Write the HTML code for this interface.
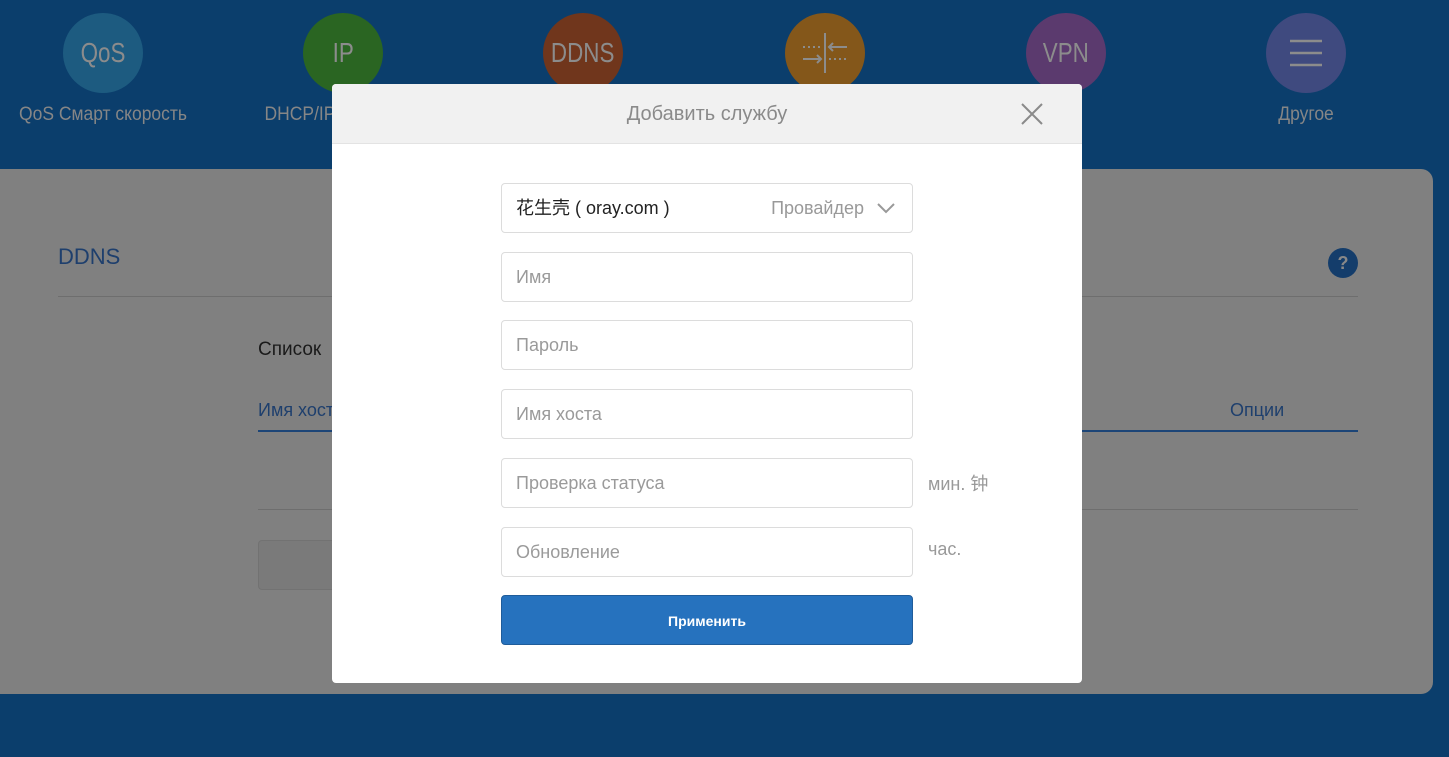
<!DOCTYPE html>
<html><head><meta charset="utf-8">
<style>
*{margin:0;padding:0;box-sizing:border-box}
body{width:1449px;height:757px;background:#0b3e6c;position:relative;overflow:hidden;font-family:"Liberation Sans","Noto Sans CJK SC",sans-serif}
.c{position:absolute;top:13px;width:80px;height:80px;border-radius:50%;color:#8c8c8c;font-family:"Liberation Sans Narrow","Liberation Sans",sans-serif;font-size:28px;text-align:center;line-height:80px}
.c span{display:inline-block;transform:scaleX(.8)}
.lb{position:absolute;top:104px;color:#868686;font-family:"Liberation Sans Narrow","Liberation Sans",sans-serif;font-size:19px;white-space:nowrap;transform:translateX(-50%) scaleX(.92)}
.panel{position:absolute;left:0;top:169px;width:1433px;height:525px;background:#808080;border-radius:0 12px 12px 0}
.abs{position:absolute}
.modal{position:absolute;left:332px;top:84px;width:750px;height:599px;background:#fff;border-radius:4px;overflow:hidden}
.mh{height:60px;background:#f1f1f1;border-bottom:1px solid #e3e3e3;text-align:center;line-height:60px;font-size:20px;color:#8a8a8a}
.in{position:absolute;left:169px;width:412px;height:50px;border:1px solid #dcdcdc;border-radius:4px;font-size:18px;color:#9a9a9a;line-height:48px;padding-left:14px}
.u{position:absolute;left:596px;font-size:18px;color:#999}
</style></head><body>
<div class="c" style="left:63px;background:#1d5b80"><span>QoS</span></div>
<div class="c" style="left:303px;background:#2a6522"><span>IP</span></div>
<div class="c" style="left:543px;background:#70361c"><span>DDNS</span></div>
<div class="c" style="left:785px;background:#84571a">
<svg width="80" height="80" viewBox="0 0 80 80"><g stroke="#8c8c8c" stroke-width="2" fill="none"><line x1="40" y1="20" x2="40" y2="60"/><path d="M44 34h18M48 30l-4 4 4 4" /><path d="M18 46h18M32 42l4 4-4 4"/><path d="M18 34h18M44 46h18" stroke-dasharray="2 3"/></g></svg></div>
<div class="c" style="left:1026px;background:#5b3a6e"><span>VPN</span></div>
<div class="c" style="left:1266px;background:#3f4a7f">
<svg width="80" height="80" viewBox="0 0 80 80"><g stroke="#8c8c8c" stroke-width="2.5"><line x1="24" y1="28" x2="56" y2="28"/><line x1="24" y1="40" x2="56" y2="40"/><line x1="24" y1="52" x2="56" y2="52"/></g></svg></div>
<div class="lb" style="left:103px">QoS Смарт скорость</div>
<div class="lb" style="left:300px">DHCP/IP</div>
<div class="lb" style="left:1306px">Другое</div>

<div class="panel"></div>
<div class="abs" style="left:58px;top:244px;font-size:22px;color:#1e3f6d">DDNS</div>
<div class="abs" style="left:58px;top:296px;width:1300px;height:1px;background:#6e6e6e"></div>
<div class="abs" style="left:1328px;top:248px;width:30px;height:30px;border-radius:50%;background:#143d6b;color:#888;font-weight:bold;font-size:18px;text-align:center;line-height:30px">?</div>
<div class="abs" style="left:258px;top:339px;font-size:19px;color:#1a1a1a">Список</div>
<div class="abs" style="left:258px;top:400px;font-size:18px;color:#1e3f6d">Имя хост</div>
<div class="abs" style="left:1230px;top:400px;font-size:18px;color:#1e3f6d">Опции</div>
<div class="abs" style="left:258px;top:430px;width:1100px;height:2px;background:#1c4577"></div>
<div class="abs" style="left:258px;top:509px;width:1100px;height:1px;background:#6e6e6e"></div>
<div class="abs" style="left:258px;top:540px;width:200px;height:50px;background:#7a7a7a;border:1px solid #727272;border-radius:4px"></div>

<div class="modal">
<div class="mh">Добавить службу</div>
<svg class="abs" style="left:688px;top:18px" width="24" height="24" viewBox="0 0 24 24"><path d="M2 2L22 22M22 2L2 22" stroke="#8a8a8a" stroke-width="2"/></svg>
<div class="in" style="top:99px;color:#222">花生壳 ( oray.com )<span style="position:absolute;right:48px;color:#999">Провайдер</span>
<svg class="abs" style="right:16px;top:18px" width="20" height="12" viewBox="0 0 20 12"><path d="M2 2l8 8 8-8" stroke="#999" stroke-width="2" fill="none"/></svg></div>
<div class="in" style="top:168px">Имя</div>
<div class="in" style="top:236px">Пароль</div>
<div class="in" style="top:305px">Имя хоста</div>
<div class="in" style="top:374px">Проверка статуса</div>
<div class="u" style="top:388px;line-height:24px">мин. 钟</div>
<div class="in" style="top:443px">Обновление</div>
<div class="u" style="top:455px">час.</div>
<div class="abs" style="left:169px;top:511px;width:412px;height:50px;background:#2672be;border:1px solid #1f5c9a;border-radius:4px;color:#fff;font-weight:bold;font-size:14px;text-align:center;line-height:50px">Применить</div>
</div>
</body></html>
